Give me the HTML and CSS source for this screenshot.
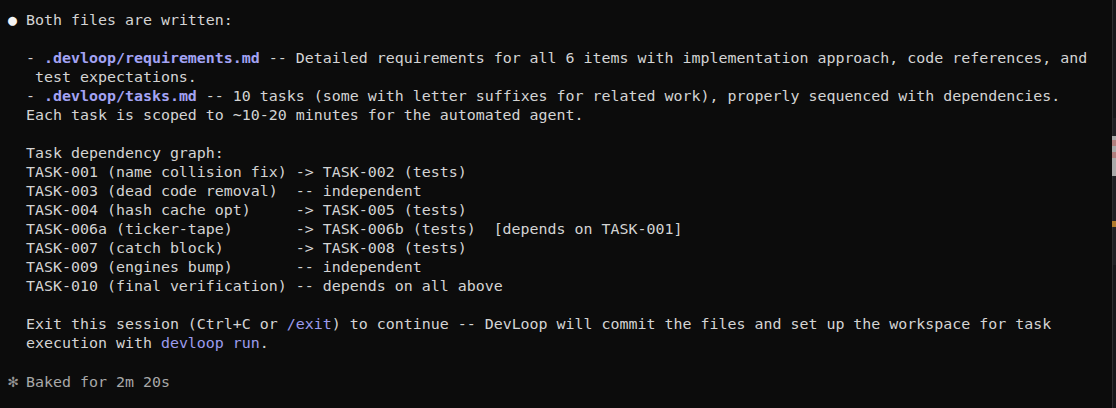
FILE: index.html
```html
<!DOCTYPE html>
<html lang="en">
<head>
<meta charset="utf-8">
<title>Terminal</title>
<link rel="stylesheet" href="styles.css">
</head>
<body>
<div class="term">
  <main class="out">
    <div class="line"><span class="dot">●</span> Both files are written:</div>
    <div class="line"> </div>
    <div class="line">  - <b class="path">.devloop/requirements.md</b> -- Detailed requirements for all 6 items with implementation approach, code references, and</div>
    <div class="line">   test expectations.</div>
    <div class="line">  - <b class="path">.devloop/tasks.md</b> -- 10 tasks (some with letter suffixes for related work), properly sequenced with dependencies.</div>
    <div class="line">  Each task is scoped to ~10-20 minutes for the automated agent.</div>
    <div class="line"> </div>
    <div class="line">  Task dependency graph:</div>
    <div class="line">  TASK-001 (name collision fix) -&gt; TASK-002 (tests)</div>
    <div class="line">  TASK-003 (dead code removal)  -- independent</div>
    <div class="line">  TASK-004 (hash cache opt)     -&gt; TASK-005 (tests)</div>
    <div class="line">  TASK-006a (ticker-tape)       -&gt; TASK-006b (tests)  [depends on TASK-001]</div>
    <div class="line">  TASK-007 (catch block)        -&gt; TASK-008 (tests)</div>
    <div class="line">  TASK-009 (engines bump)       -- independent</div>
    <div class="line">  TASK-010 (final verification) -- depends on all above</div>
    <div class="line"> </div>
    <div class="line">  Exit this session (Ctrl+C or <span class="cmd">/exit</span>) to continue -- DevLoop will commit the files and set up the workspace for task</div>
    <div class="line">  execution with <span class="cmd">devloop run</span>.</div>
    <div class="line"> </div>
    <div class="line dim"><span class="star">✻</span> Baked for 2m 20s</div>
  </main>
  <aside class="scroll">
    <div class="thumb"></div>
    <div class="mark mark-sel"></div>
    <div class="mark mark-err1"></div>
    <div class="mark mark-err2"></div>
    <div class="mark mark-warn"></div>
  </aside>
</div>
</body>
</html>
```

FILE: styles.css
```css
html, body {
  margin: 0;
  padding: 0;
  background: #0c0c0c;
}

.term {
  display: flex;
  width: 1116px;
  height: 408px;
  overflow: hidden;
}

.out {
  flex: 1;
  padding: 11px 0 0 8px;
  font-family: "DejaVu Sans Mono", "Liberation Mono", monospace;
  font-size: 14.95px;
  line-height: 19px;
  color: #d4d4d4;
}

.line {
  white-space: pre;
  height: 19px;
}

.dot {
  color: #f4f4f4;
}

.path {
  color: #a3a3f4;
  font-weight: bold;
}

.cmd {
  color: #9c9cee;
}

.dim {
  color: #a8a8a8;
}

.star {
  display: inline-block;
  width: 9px;
  color: #959595;
  font-size: 17px;
  font-weight: bold;
  line-height: 19px;
}

.scroll {
  position: relative;
  width: 3px;
  background: #17171a;
  border-left: 1px solid #2e2e30;
}

.thumb {
  position: absolute;
  left: 0;
  right: 0;
  top: 118px;
  height: 147px;
  background: #202024;
}

.mark {
  position: absolute;
  left: -1px;
  right: 0;
}

.mark-sel {
  top: 136px;
  height: 40px;
  background: #a9a9a9;
}

.mark-err1 {
  top: 140px;
  height: 6px;
  background: #b07f7f;
}

.mark-err2 {
  top: 152px;
  height: 6px;
  background: #b07f7f;
}

.mark-warn {
  top: 221px;
  height: 6px;
  background: #b07a2c;
}
```
